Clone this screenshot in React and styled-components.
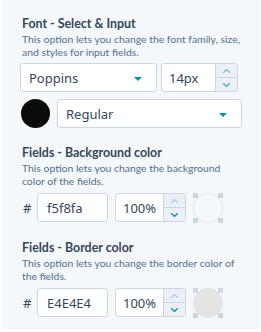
import React from "react";
import styled, { createGlobalStyle } from "styled-components";

const Global = createGlobalStyle`
  html, body { margin: 0; padding: 0; background: #ffffff; }
  body { font-family: "Noto Sans", "Open Sans", sans-serif; }
  * { box-sizing: border-box; }
`;

const Panel = styled.div`
  margin-left: 2px;
  width: 258px;
  height: 329px;
  background: #f5f8fa;
  padding: 16px 18px 0 18px;
  display: flex;
  flex-direction: column;
`;

const Section = styled.section`
  display: flex;
  flex-direction: column;
  margin-top: ${(p) => p.$top || 0}px;
`;

const Title = styled.h3`
  margin: 0;
  font-family: Lato, "Noto Sans", sans-serif;
  font-size: 12.4px;
  line-height: 16px;
  font-weight: 700;
  color: #33475b;
  padding-left: 2px;
`;

const Desc = styled.p`
  margin: 1px 0 0 0;
  font-family: Lato, "Noto Sans", sans-serif;
  font-size: 10.4px;
  line-height: 13px;
  color: #516f90;
  padding-left: 2px;
`;

const Row = styled.div`
  display: flex;
  align-items: center;
  gap: ${(p) => p.$gap || 7}px;
  margin-top: ${(p) => p.$top || 0}px;
  height: 29px;
`;

const Box = styled.div`
  height: 29px;
  width: ${(p) => p.$w}px;
  background: #ffffff;
  border: 1px solid #cbd6e2;
  border-radius: 3px;
  display: flex;
  align-items: center;
  color: #33475b;
  font-size: 13px;
  overflow: hidden;
  flex: none;
`;

const Value = styled.span`
  flex: 1;
  padding-left: ${(p) => p.$pl || 8}px;
`;

const Caret = styled.span`
  width: 0;
  height: 0;
  border-left: 4px solid transparent;
  border-right: 4px solid transparent;
  border-top: 4px solid #0091ae;
  margin-right: 14px;
  margin-top: 3px;
`;

const Stepper = styled.div`
  width: 22px;
  align-self: stretch;
  border-left: 1px solid #cbd6e2;
  background: #eaf0f6;
  display: flex;
  flex-direction: column;
`;

const Step = styled.div`
  flex: 1;
  display: flex;
  align-items: center;
  justify-content: center;
  & + & { border-top: 1px solid #cbd6e2; }
`;

const Dot = styled.div`
  width: 29px;
  height: 29px;
  border-radius: 50%;
  background: #0b0b0b;
  flex: none;
  margin-left: 1px;
`;

const Hash = styled.span`
  width: 9px;
  margin-left: 3px;
  margin-right: -2px;
  font-size: 13px;
  color: #33475b;
`;

const Swatch = styled.div`
  width: 30px;
  height: 30px;
  flex: none;
  display: flex;
  background:
    linear-gradient(#cbd6e2, #cbd6e2) left top / 5px 5px no-repeat,
    linear-gradient(#cbd6e2, #cbd6e2) right top / 5px 5px no-repeat,
    linear-gradient(#cbd6e2, #cbd6e2) left bottom / 5px 5px no-repeat,
    linear-gradient(#cbd6e2, #cbd6e2) right bottom / 5px 5px no-repeat;
`;

const SwatchFill = styled.div`
  flex: 1;
  border-radius: 50%;
  border: 1px solid #dfe3eb;
  background: ${(p) => p.$color};
`;

const Chevron = ({ up, color }) => (
  <svg width="9" height="6" viewBox="0 0 9 6">
    <path
      d={up ? "M1.5 4.5 L4.5 1.5 L7.5 4.5" : "M1.5 1.5 L4.5 4.5 L7.5 1.5"}
      fill="none"
      stroke={color}
      strokeWidth="1.1"
      strokeLinecap="round"
      strokeLinejoin="round"
    />
  </svg>
);

const NumberBox = ({ value, w, upColor, downColor }) => (
  <Box $w={w}>
    <Value $pl={7}>{value}</Value>
    <Stepper>
      <Step>
        <Chevron up color={upColor} />
      </Step>
      <Step>
        <Chevron color={downColor} />
      </Step>
    </Stepper>
  </Box>
);

const ColorRow = ({ hex, fill, top }) => (
  <Row $top={top} $gap={7}>
    <Hash>#</Hash>
    <Box $w={71}>
      <Value $pl={9}>{hex}</Value>
    </Box>
    <NumberBox value="100%" w={71} upColor="#b9c7d6" downColor="#0091ae" />
    <Swatch>
      <SwatchFill $color={fill} />
    </Swatch>
  </Row>
);

export default function App() {
  return (
    <>
      <Global />
      <Panel>
        <Section>
          <Title>Font - Select &amp; Input</Title>
          <Desc>
            This option lets you change the font family, size, and styles for input fields.
          </Desc>
          <Row $top={4} $gap={4}>
            <Box $w={137}>
              <Value>Poppins</Value>
              <Caret />
            </Box>
            <NumberBox value="14px" w={77} upColor="#6fb8c9" downColor="#3fa7bf" />
          </Row>
          <Row $top={7} $gap={7}>
            <Dot />
            <Box $w={185}>
              <Value>Regular</Value>
              <Caret />
            </Box>
          </Row>
        </Section>
        <Section $top={17}>
          <Title>Fields - Background color</Title>
          <Desc>This option lets you change the background color of the fields.</Desc>
          <ColorRow hex="f5f8fa" fill="#f5f8fa" top={5} />
        </Section>
        <Section $top={18}>
          <Title>Fields - Border color</Title>
          <Desc>This option lets you change the border color of the fields.</Desc>
          <ColorRow hex="E4E4E4" fill="#e4e4e4" top={5} />
        </Section>
      </Panel>
    </>
  );
}
